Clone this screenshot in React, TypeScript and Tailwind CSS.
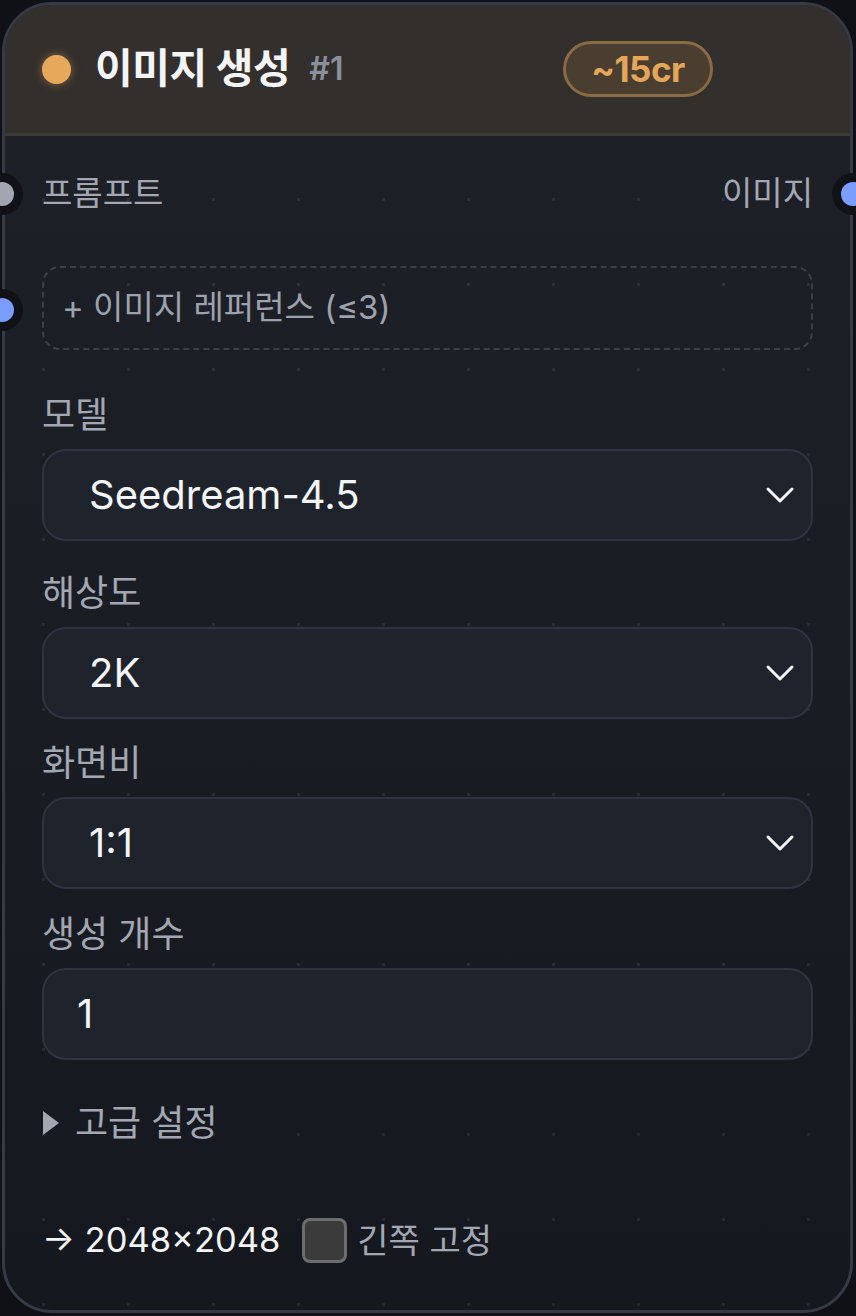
import React from 'react';

const FONT = "font-['Inter','Noto_Sans_CJK_KR',sans-serif]";

const Chevron = () => (
    <svg width="30" height="18" viewBox="0 0 30 18" fill="none" className="shrink-0">
        <polyline points="3,3 15,15 27,3" stroke="#f3f4f6" strokeWidth="3" strokeLinecap="round" strokeLinejoin="round" />
    </svg>
);

const Port = ({ color, side }: { color: string; side: 'left' | 'right' }) => (
    <span
        className={`absolute top-1/2 -translate-y-1/2 w-[42px] h-[42px] rounded-full bg-[#101217] flex items-center justify-center ${side === 'left' ? 'left-[-24px]' : 'right-[-24px]'}`}
    >
        <span className={`w-[24px] h-[24px] rounded-full ${color}`} />
    </span>
);

const Field = ({ label, value, gap, select = true }: { label: string; value: string; gap: string; select?: boolean }) => (
    <div className={gap}>
        <div className="h-[40px] leading-[40px] text-[36px] text-[#a2a7b2]">{label}</div>
        <div className="mt-[14px] h-[92px] rounded-[24px] bg-[#1f232c] border-2 border-[#2f3440] flex items-center justify-between pr-[16px]">
            <span className={`text-[40px] text-[#f3f4f6] ${select ? 'pl-[45px]' : 'pl-[33px]'}`}>{value}</span>
            {select && <Chevron />}
        </div>
    </div>
);

export default function App() {
    return (
        <div className={`w-[856px] h-[1316px] bg-[#0f1116] p-[2px] pr-[3px] pb-[3px] ${FONT}`}>
            <div className="relative h-full rounded-[50px] border-[3px] border-[#353a45] bg-gradient-to-b from-[#1f2129] to-[#15181f]">
                {/* faint dot grid seen through the card */}
                <div className="absolute inset-0 rounded-[47px] bg-[radial-gradient(circle,rgba(255,255,255,0.07)_1.5px,transparent_2px)] bg-[size:85px_85px] bg-[position:-4px_-18px] pointer-events-none" />

                {/* header */}
                <div className="relative h-[131px] rounded-t-[47px] bg-[#35302c]/95 border-b-[3px] border-[#3d3935] flex items-center pl-[37px] pr-[137px]">
                    <span className="w-[29px] h-[29px] rounded-full bg-[#e6a95c] shadow-[0_0_10px_rgba(230,169,92,0.45)]" />
                    <span className="ml-[24px] text-[41px] font-bold text-[#f3f4f6] tracking-[-0.5px]">이미지 생성</span>
                    <span className="ml-[19px] text-[32px] font-semibold text-[#8b919c]">#1</span>
                    <span className="ml-auto w-[150px] h-[56px] rounded-full border-[3px] border-[#8a6b44] bg-[#4a3e31] flex items-center justify-center text-[35px] font-bold text-[#e4a658] tracking-[-0.5px]">
                        ~15cr
                    </span>
                </div>

                <div className="relative px-[37px]">
                    {/* port row */}
                    <div className="mt-[36px] h-[44px] flex items-center justify-between text-[33px] text-[#a2a7b2]">
                        <span>프롬프트</span>
                        <span>이미지</span>
                    </div>

                    {/* reference images */}
                    <div className="mt-[50px] h-[84px] rounded-[18px] border-2 border-dashed border-[#3a3f4a] flex items-center pl-[18px] text-[33px] text-[#9ca2ad]">
                        + 이미지 레퍼런스 (≤3)
                    </div>

                    <Field label="모델" value="Seedream-4.5" gap="mt-[45px]" />
                    <Field label="해상도" value="2K" gap="mt-[32px]" />
                    <Field label="화면비" value="1:1" gap="mt-[24px]" />
                    <Field label="생성 개수" value="1" gap="mt-[25px]" select={false} />

                    <div className="mt-[43px] h-[40px] flex items-center text-[36px] text-[#a2a7b2]">
                        <svg width="18" height="26" viewBox="0 0 18 26" className="shrink-0">
                            <polygon points="1,1 17,13 1,25" fill="#a2a7b2" />
                        </svg>
                        <span className="ml-[15px]">고급 설정</span>
                    </div>

                    <div className="mt-[74px] h-[46px] flex items-center">
                        <span className="text-[34.5px] text-[#f3f4f6]">→ 2048×2048</span>
                        <span className="ml-[22px] w-[45px] h-[45px] rounded-[8px] border-[3px] border-[#6d6d6d] bg-[#3b3b3b]" />
                        <span className="ml-[10px] text-[34px] text-[#a2a7b2]">긴쪽 고정</span>
                    </div>
                </div>

                {/* ports: positioned over the card edge */}
                <div className="absolute left-0 right-0 top-[167px] h-[44px]">
                    <Port color="bg-[#a0a5b0]" side="left" />
                    <Port color="bg-[#7b9dff]" side="right" />
                </div>
                <div className="absolute left-0 top-[283px] h-[44px]">
                    <Port color="bg-[#7b9dff]" side="left" />
                </div>
            </div>
        </div>
    );
}
